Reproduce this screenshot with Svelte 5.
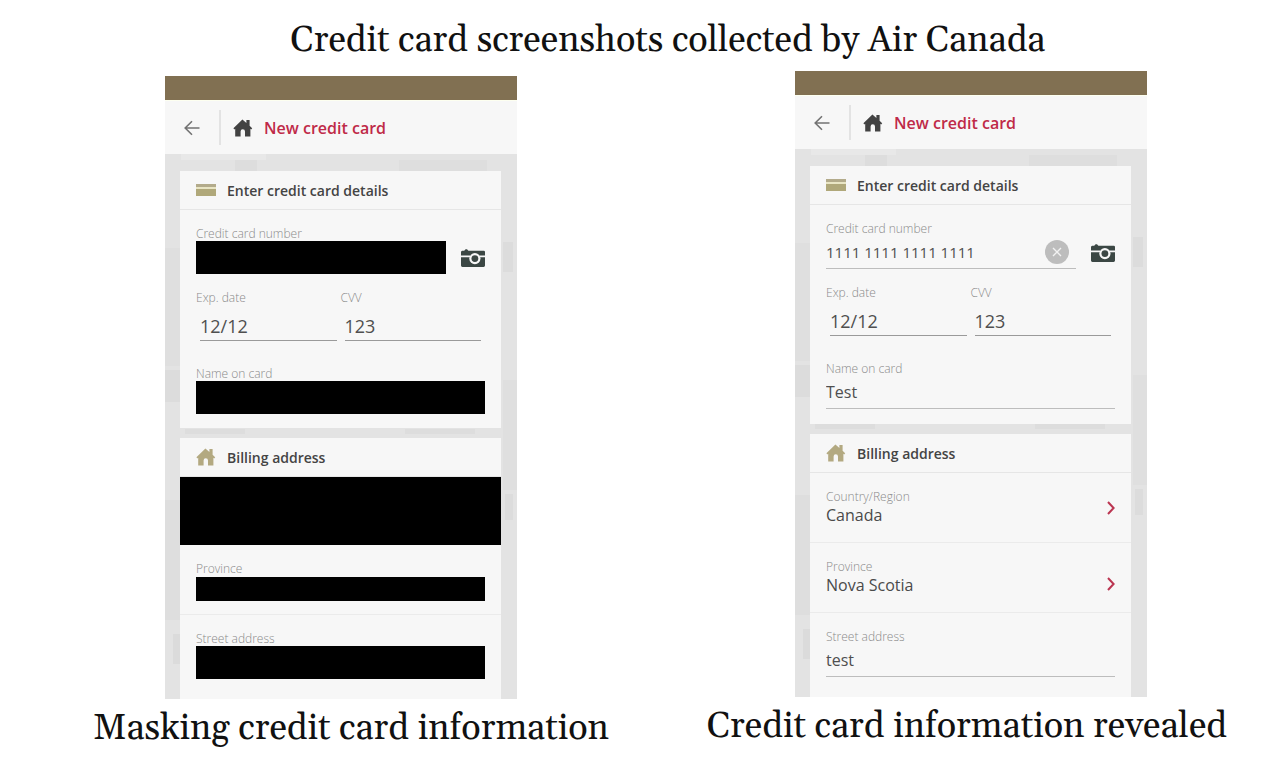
<script>
  const screens = [
    { id: 'masked', masked: true, caption: 'Masking credit card information' },
    { id: 'revealed', masked: false, caption: 'Credit card information revealed' },
  ];
</script>

{#snippet house()}
  <svg class="house" viewBox="0 0 20 18" aria-hidden="true">
    <path d="M9.4 0.4 L13.4 4 V1 H16.6 V6.8 L19.2 9.2 L18.2 10.4 L17.4 9.8 V17.6 H12 V12.6 Q12 10.2 9.8 10.2 Q7.6 10.2 7.6 12.6 V17.6 H2.2 V9.8 L1.4 10.4 L0.4 9.2 Z" />
  </svg>
{/snippet}

{#snippet chevron()}
  <svg class="chevron" viewBox="0 0 8 14" aria-hidden="true">
    <path d="M1 1 L6.6 7 L1 13" />
  </svg>
{/snippet}

<main>
  <h1>Credit card screenshots collected by Air Canada</h1>

  <div class="pair">
    {#each screens as s (s.id)}
      <figure class:masked={s.masked}>
        <div class="phone">
          <div class="status"></div>
          <header>
            <button class="back" aria-label="Back">
              <svg viewBox="0 0 16 16" aria-hidden="true"><path d="M15.5 8 H1.2 M8 1.2 L1.2 8 L8 14.8" /></svg>
            </button>
            <span class="rule"></span>
            <a class="home" href="#home" aria-label="Home">{@render house()}</a>
            <h2>New credit card</h2>
          </header>

          <div class="content">
            <section>
              <h3>
                <svg class="card-icon" viewBox="0 0 20 12" aria-hidden="true">
                  <rect width="20" height="3" fill="#b3ab8b" />
                  <rect y="3" width="20" height="2" fill="#e9e5c4" />
                  <rect y="5" width="20" height="7" fill="#b0a87a" />
                </svg>
                Enter credit card details
              </h3>
              <div class="body">
                <label for="{s.id}-number">Credit card number</label>
                <div class="number">
                  <div class="entry">
                    <input id="{s.id}-number" class="digits" value={s.masked ? '' : '1111 1111 1111 1111'} />
                    {#if !s.masked}
                      <button class="clear" aria-label="Clear">
                        <svg viewBox="0 0 24 24" aria-hidden="true">
                          <circle cx="12" cy="12" r="12" />
                          <path d="M8 8 L16 16 M16 8 L8 16" />
                        </svg>
                      </button>
                    {/if}
                  </div>
                  <button class="camera" aria-label="Scan card">
                    <svg viewBox="0 0 24 18" aria-hidden="true">
                      <path d="M0 3 Q0 2 1.2 1.8 H3.2 L4.6 0.2 H6 L7.4 1.8 H22.8 Q24 1.8 24 3 V16.6 Q24 18 22.6 18 H1.4 Q0 18 0 16.6 Z" fill="#3b4744" />
                      <path d="M0 7.4 H9 M18.5 7.4 H24" stroke="#f7f7f7" stroke-width="1.8" />
                      <circle cx="13.9" cy="9.6" r="5.6" fill="#f7f7f7" />
                      <circle cx="13.9" cy="9.6" r="3.4" fill="#3b4744" />
                    </svg>
                  </button>
                </div>

                <div class="dates">
                  <div>
                    <label for="{s.id}-exp">Exp. date</label>
                    <input id="{s.id}-exp" value="12/12" />
                  </div>
                  <div>
                    <label for="{s.id}-cvv">CVV</label>
                    <input id="{s.id}-cvv" value="123" />
                  </div>
                </div>

                <label for="{s.id}-name">Name on card</label>
                <div class="entry">
                  <input id="{s.id}-name" value={s.masked ? '' : 'Test'} />
                </div>
              </div>
            </section>

            <section>
              <h3><span class="gold">{@render house()}</span>Billing address</h3>
              {#if s.masked}
                <button class="row hidden-row" aria-label="Country/Region"></button>
                <button class="row">
                  <span class="label">Province</span>
                  <span class="redacted"></span>
                </button>
              {:else}
                <button class="row">
                  <span class="label">Country/Region</span>
                  <span class="value">Canada</span>
                  {@render chevron()}
                </button>
                <button class="row">
                  <span class="label">Province</span>
                  <span class="value">Nova Scotia</span>
                  {@render chevron()}
                </button>
              {/if}
              <div class="body street">
                <label for="{s.id}-street">Street address</label>
                <div class="entry">
                  <input id="{s.id}-street" value={s.masked ? '' : 'test'} />
                </div>
              </div>
            </section>
          </div>
        </div>
        <figcaption>{s.caption}</figcaption>
      </figure>
    {/each}
  </div>
</main>

<style>
  :global(body) {
    margin: 0;
    background: #fff;
  }

  * {
    box-sizing: border-box;
  }

  main {
    padding: 18px 29px 0 61px;
    font-family: 'Open Sans', 'Noto Sans', sans-serif;
    color: #4a4a4a;
  }

  h1,
  figcaption {
    font: 400 36px/45px Gelasio, 'Liberation Serif', serif;
    color: #111;
    text-align: center;
  }

  h1 {
    margin: 0 0 8px;
    padding-left: 24px;
  }

  .pair {
    display: grid;
    grid-template-columns: repeat(2, minmax(0, 1fr));
    column-gap: 70px;
    align-items: start;
  }

  figure {
    margin: 0;
    display: flex;
    flex-direction: column;
    align-items: center;
  }

  figure.masked {
    padding-top: 5px;
  }

  figcaption {
    padding: 7px 8px 0 0;
  }

  .masked figcaption {
    padding: 7px 0 0 20px;
  }

  .phone {
    width: 100%;
    max-width: 352px;
    background: #f7f7f7;
  }

  .status {
    height: 24px;
    background: #817052;
  }

  header {
    display: flex;
    align-items: center;
    height: 54px;
    padding-left: 19px;
    border-top: 1px solid #fdfff0;
  }

  h2 {
    margin: 0;
    font-size: 16px;
    font-weight: 600;
    line-height: 20px;
    color: #bf2a48;
  }

  button {
    display: block;
    padding: 0;
    border: 0;
    background: none;
    font: inherit;
    color: inherit;
    text-align: left;
  }

  svg {
    display: block;
  }

  .back svg {
    width: 16px;
    height: 16px;
    fill: none;
    stroke: #737373;
    stroke-width: 1.6;
  }

  .rule {
    width: 2px;
    height: 35px;
    margin: 0 12px 0 19px;
    background: #e3e3e3;
  }

  .house {
    width: 20px;
    height: 18px;
    fill: #424242;
  }

  .home {
    margin-right: 11px;
  }

  .content {
    display: flex;
    flex-direction: column;
    gap: 10px;
    padding: 17px 16px 0 15px;
    background:
      linear-gradient(#dddddd, #dddddd) 70px 6px / 22px 11px no-repeat,
      linear-gradient(#e8e8e8, #e8e8e8) 16px 0 / 85px 6px no-repeat,
      linear-gradient(#dedede, #dedede) 234px 6px / 88px 11px no-repeat,
      linear-gradient(#dfdfdf, #dfdfdf) 0 94px / 15px 118px no-repeat,
      linear-gradient(#dcdcdc, #dcdcdc) 0 216px / 15px 32px no-repeat,
      linear-gradient(#dcdcdc, #dcdcdc) 338px 88px / 10px 30px no-repeat,
      linear-gradient(#dedede, #dedede) 0 346px / 15px 120px no-repeat,
      linear-gradient(#dcdcdc, #dcdcdc) 340px 340px / 8px 26px no-repeat,
      linear-gradient(#dfdfdf, #dfdfdf) 338px 226px / 14px 110px no-repeat,
      linear-gradient(#dbdbdb, #dbdbdb) 8px 480px / 8px 30px no-repeat,
      linear-gradient(#dddddd, #dddddd) 20px 275px / 60px 5px no-repeat,
      linear-gradient(#dddddd, #dddddd) 240px 275px / 70px 5px no-repeat,
      #e3e3e3;
  }

  section {
    background: #f7f7f7;
  }

  h3 {
    display: flex;
    align-items: center;
    gap: 11px;
    height: 39px;
    margin: 0;
    padding-left: 16px;
    border-bottom: 1px solid #e6e6e6;
    font-size: 14px;
    font-weight: 600;
    color: #444;
  }

  .card-icon {
    width: 20px;
    height: 12px;
  }

  .gold .house {
    fill: #b3a981;
  }

  .body {
    padding: 16px 16px 15px;
  }

  .masked .body {
    padding-bottom: 14px;
  }

  label,
  .label {
    display: block;
    font-size: 12px;
    font-weight: 300;
    line-height: 16px;
    color: #8a8a8a;
  }

  input {
    display: block;
    width: 100%;
    height: 33px;
    padding: 0;
    border: 0;
    border-bottom: 1px solid #bdbdbd;
    border-radius: 0;
    outline: 0;
    background: none;
    font: 400 16px/20px 'Open Sans', 'Noto Sans', sans-serif;
    color: #4f4f4f;
  }

  .digits {
    font-size: 15px;
  }

  .masked .entry input {
    border: 0;
    background: #000;
  }

  .entry {
    position: relative;
    flex: 1;
    margin-top: -1px;
  }

  .number {
    display: flex;
    align-items: center;
    gap: 15px;
  }

  .clear {
    position: absolute;
    right: 7px;
    top: 4px;
  }

  .clear svg {
    width: 24px;
    height: 24px;
    fill: #bdbdbd;
    stroke: none;
  }

  .clear path {
    stroke: #f2f2f2;
    stroke-width: 1.4;
  }

  .camera svg {
    width: 24px;
    height: 18px;
  }

  .dates {
    display: grid;
    grid-template-columns: 1fr 1fr;
    padding: 16px 0 25px;
  }

  .dates input {
    width: calc(100% - 8px);
    height: 35px;
    margin-left: 4px;
    padding-top: 6px;
    border-color: #9a9a9a;
    font-size: 18px;
  }

  .row {
    position: relative;
    width: 100%;
    height: 70px;
    padding: 16px 16px 0;
    border-bottom: 1px solid #ebebeb;
    display: flex;
    flex-direction: column;
  }

  .value {
    font-size: 16px;
    line-height: 20px;
  }

  .hidden-row {
    height: 68px;
    border: 0;
    background: #000;
  }

  .redacted {
    width: 100%;
    height: 24px;
    background: #000;
  }

  .chevron {
    position: absolute;
    right: 16px;
    top: 28px;
    width: 8px;
    height: 14px;
    fill: none;
    stroke: #bb3551;
    stroke-width: 2;
  }

  .row + .row .chevron {
    top: 34px;
  }

  .street,
  .masked .street {
    padding-bottom: 20px;
  }
</style>
